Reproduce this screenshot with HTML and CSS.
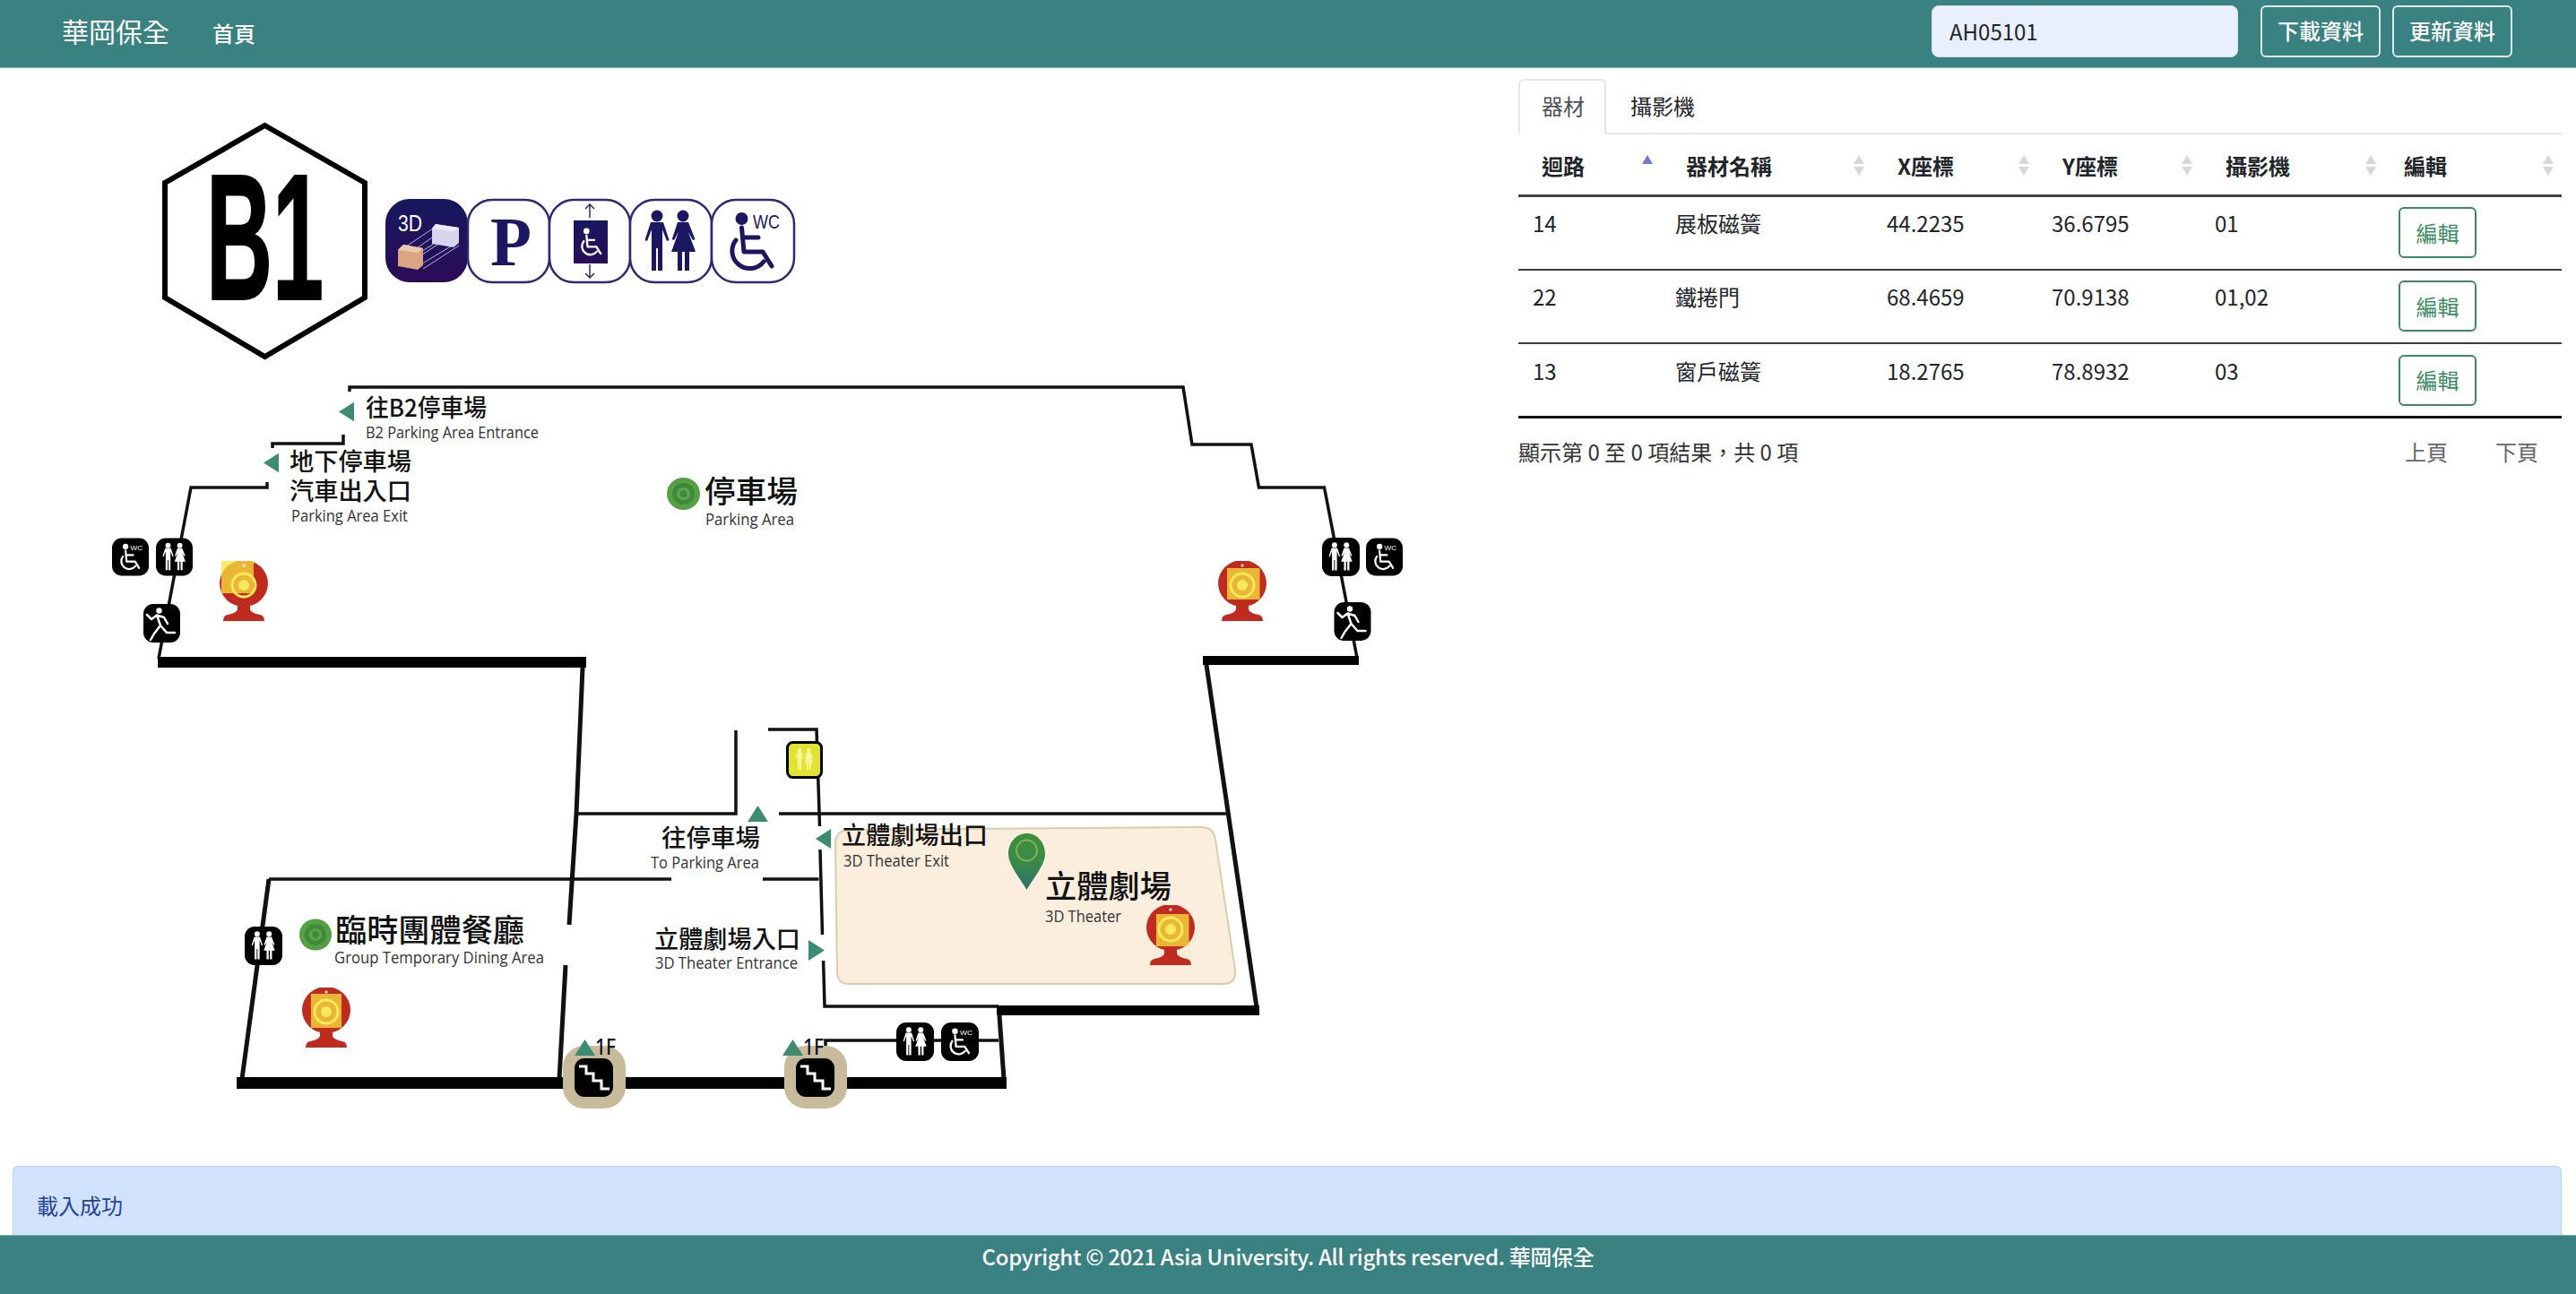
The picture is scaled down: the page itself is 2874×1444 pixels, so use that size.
FILE: index.html
```html
<!DOCTYPE html>
<html lang="zh-Hant">
<head>
<meta charset="utf-8">
<title>華岡保全</title>
<link rel="stylesheet" href="styles.css">
</head>
<body>
<header class="topbar">
  <a class="brand">華岡保全</a>
  <a class="nav-link">首頁</a>
  <input class="search" type="text" value="AH05101" aria-label="search">
  <button class="top-btn">下載資料</button>
  <button class="top-btn">更新資料</button>
</header>

<main class="content">
  <section class="map-pane">
    <svg class="map" viewBox="0 75 1694 1226" xmlns="http://www.w3.org/2000/svg">
      <defs>
        <linearGradient id="navy" x1="0" y1="0" x2="0" y2="1"><stop offset="0" stop-color="#16195f"/><stop offset="1" stop-color="#2b0b57"/></linearGradient>
        <linearGradient id="pinfill" x1="0" y1="0" x2="0" y2="1"><stop offset="0" stop-color="#3f8f36"/><stop offset=".5" stop-color="#3a8a4a"/><stop offset="1" stop-color="#2f6f6a"/></linearGradient>
        <symbol id="people" viewBox="0 0 91 93">
          <circle cx="30" cy="18" r="6.5"/><circle cx="59" cy="18" r="6.5"/>
          <path d="M23 25H37L43.5 45 41 46 36 33V79H31V54H29V79H24V33L19 46 16.5 45Z"/>
          <path d="M53 25H65L72.5 44 70 45 65 36 73 58H66V79H61V58H58V79H53V58H46L54 36 49 45 46.7 44Z"/>
        </symbol>
        <symbol id="chair" viewBox="0 0 91 93">
          <circle cx="33.5" cy="21" r="7"/>
          <path class="chair-stroke" d="M33.5 31 36 58H57L67 74M35 42H52M27 45A19 19 0 1 0 58 69"/>
        </symbol>
        <symbol id="tile-people" viewBox="0 0 42 43">
          <rect width="42" height="43" rx="11" fill="#000"/>
          <use href="#people" class="white-glyph" width="42" height="43"/>
        </symbol>
        <symbol id="tile-chair" viewBox="0 0 42 43">
          <rect width="42" height="43" rx="11" fill="#000"/>
          <use href="#chair" class="white-glyph" width="42" height="43"/>
          <text class="tiny-wc" x="21" y="14" textLength="14" lengthAdjust="spacingAndGlyphs">WC</text>
        </symbol>
        <symbol id="tile-run" viewBox="0 0 41 43">
          <rect width="41" height="43" rx="11" fill="#000"/>
          <circle cx="17.500" cy="7.500" r="3.200" fill="#fff"/>
          <path class="run-stroke" d="M4 12 9 17 15 12.500 19 24 12 33 8 40M15 12.500 23 15 27 22M19 24 26 32H35"/>
        </symbol>
        <symbol id="tile-stairs" viewBox="0 0 43 43">
          <rect width="43" height="43" rx="11" fill="#000"/>
          <path class="stairs-stroke" d="M5 9H13V17H21V25H30V34H39"/>
        </symbol>
        <symbol id="dot" viewBox="0 0 37 36">
          <ellipse cx="18.500" cy="18" rx="18.500" ry="18" fill="#55a044"/>
          <ellipse cx="18.500" cy="18" rx="12.500" ry="12" fill="#3e8a3a"/>
          <ellipse cx="18.500" cy="18" rx="7.500" ry="7" fill="#5aa64c"/>
          <ellipse cx="18.500" cy="18" rx="4" ry="4" fill="#3e8a3a"/>
        </symbol>
        <symbol id="cam-body" viewBox="0 0 54 67">
          <ellipse cx="27" cy="25" rx="27" ry="26" fill="#bf2c1f"/>
          <path d="M20 47H34V54Q35 58 45 60Q50 61 50 67H4Q4 61 9 60Q19 58 20 54Z" fill="#bf2c1f"/>
        </symbol>
        <symbol id="cam-lens" viewBox="0 0 54 67">
          <circle cx="27" cy="5" r="1.500" fill="#fff"/>
          <circle cx="27" cy="27" r="13" fill="none" stroke="#f8ea5a" stroke-width="3"/>
          <circle cx="27" cy="27" r="6" fill="#f8ea5a"/>
        </symbol>
        <symbol id="arrow-left" viewBox="0 0 18 23"><path d="M0 11.500 18 0V23Z" fill="#3d8b72"/></symbol>
        <symbol id="arrow-right" viewBox="0 0 18 23"><path d="M18 11.500 0 0V23Z" fill="#3d8b72"/></symbol>
        <symbol id="arrow-up" viewBox="0 0 23 18"><path d="M11.500 0 23 18H0Z" fill="#3d8b72"/></symbol>
      </defs>

      <!-- Floor badge -->
      <path class="hex" d="M295.500 140 407 204V332L295.500 398 184 332V204Z"/>
      <text class="b1" x="230" y="334" textLength="131" lengthAdjust="spacingAndGlyphs">B1</text>

      <!-- Facility tiles -->
      <rect x="430" y="222" width="92" height="93" rx="27" fill="url(#navy)"/>
      <text class="tile-3d" x="444" y="258" textLength="27" lengthAdjust="spacingAndGlyphs">3D</text>
      <path class="cube-lines" d="M450 277 486 253M456 283 494 257M462 290 505 262M468 296 511 270M472 300 512 274M446 296 484 272"/>
      <path d="M486 250 512 254V271L506 276 482 272V255Z" fill="#d7d5ee"/>
      <path d="M486 250 512 254 506 258 482 255Z" fill="#ecebf8"/>
      <path d="M450 273 472 277V296L466 301 444 297V279Z" fill="#dba583"/>
      <path d="M450 273 472 277 466 282 444 279Z" fill="#eac9b0"/>
      <rect class="tile" x="522" y="223" width="91" height="92" rx="27"/>
      <text class="tile-p" x="547" y="296" textLength="46" lengthAdjust="spacingAndGlyphs">P</text>
      <rect class="tile" x="613" y="223" width="90" height="92" rx="27"/>
      <path class="thin-arrows" d="M658 228V243M653 233 658 228 663 233M658 295V310M653 305 658 310 663 305"/>
      <rect x="640" y="246" width="38" height="48" fill="url(#navy)"/>
      <use href="#chair" class="white-glyph" x="638" y="248" width="44" height="44"/>
      <rect class="tile" x="703" y="223" width="91" height="92" rx="27"/>
      <use href="#people" class="navy-glyph" x="703" y="223" width="91" height="93"/>
      <rect class="tile" x="794" y="223" width="92" height="92" rx="27"/>
      <use href="#chair" class="navy-glyph" x="794" y="223" width="91" height="93"/>
      <text class="tile-wc" x="840" y="255" textLength="30" lengthAdjust="spacingAndGlyphs">WC</text>

      <!-- Walls -->
      <path class="wall" d="M390 437V432H1320L1330 496H1396L1404.500 544H1477.500L1514 734"/>
      <path class="wall" d="M383 485V495H304V500"/>
      <path class="wall" d="M298 538V544H213L177 735"/>
      <rect class="wall-heavy" x="176" y="733" width="478" height="12"/>
      <path class="wall wall-m" d="M650 745 643 908 635 1032M631 1077 624 1204"/>
      <path class="wall-heavy" d="M1342 732H1516V742H1342Z"/>
      <path class="wall wall-m" d="M1346 742 1402 1124"/>
      <path class="wall wall-s" d="M643 908H821V815M869 908H1369M857 814H911L914.500 922M915 948 917.500 1043M918.600 1072 920 1123H1114M300 981H749M851 981H913.500M921 1168V1161H1114"/>
      <path class="wall wall-m" d="M300 981 270 1204"/>
      <rect class="wall-heavy" x="1112" y="1122" width="293" height="11"/>
      <path class="wall wall-m" d="M1115 1133 1120 1204"/>
      <rect class="wall-heavy" x="264" y="1202" width="859" height="13"/>

      <!-- Theater room -->
      <path class="room" d="M948 926 1340 923Q1354 923 1356 937L1378 1082Q1380 1098 1364 1098H948Q934 1098 934 1084L932 942Q932 926 948 926Z"/>

      <!-- Labels -->
      <text class="zh" x="408" y="465" textLength="135" lengthAdjust="spacingAndGlyphs">往B2停車場</text>
      <text class="en" x="408" y="489" textLength="193" lengthAdjust="spacingAndGlyphs">B2 Parking Area Entrance</text>
      <text class="zh" x="323" y="525" textLength="136" lengthAdjust="spacingAndGlyphs">地下停車場</text>
      <text class="zh" x="323" y="558" textLength="136" lengthAdjust="spacingAndGlyphs">汽車出入口</text>
      <text class="en" x="325" y="582" textLength="130" lengthAdjust="spacingAndGlyphs">Parking Area Exit</text>
      <text class="zh zh-l" x="786" y="561" textLength="104" lengthAdjust="spacingAndGlyphs">停車場</text>
      <text class="en" x="787" y="586" textLength="99" lengthAdjust="spacingAndGlyphs">Parking Area</text>
      <text class="zh" x="738" y="945" textLength="110" lengthAdjust="spacingAndGlyphs">往停車場</text>
      <text class="en" x="726" y="969" textLength="121" lengthAdjust="spacingAndGlyphs">To Parking Area</text>
      <text class="zh" x="939" y="942" textLength="163" lengthAdjust="spacingAndGlyphs">立體劇場出口</text>
      <text class="en" x="941" y="967" textLength="118" lengthAdjust="spacingAndGlyphs">3D Theater Exit</text>
      <text class="zh zh-xl" x="1166" y="1002" textLength="141" lengthAdjust="spacingAndGlyphs">立體劇場</text>
      <text class="en" x="1166" y="1029" textLength="85" lengthAdjust="spacingAndGlyphs">3D Theater</text>
      <text class="zh zh-xl" x="374" y="1051" textLength="211" lengthAdjust="spacingAndGlyphs">臨時團體餐廳</text>
      <text class="en" x="373" y="1075" textLength="234" lengthAdjust="spacingAndGlyphs">Group Temporary Dining Area</text>
      <text class="zh" x="730" y="1058" textLength="163" lengthAdjust="spacingAndGlyphs">立體劇場入口</text>
      <text class="en" x="731" y="1081" textLength="159" lengthAdjust="spacingAndGlyphs">3D Theater Entrance</text>

      <!-- Markers -->
      <use href="#arrow-left" x="378" y="448" width="17" height="23"/>
      <use href="#arrow-left" x="294" y="505" width="17" height="23"/>
      <use href="#arrow-left" x="909" y="925" width="19" height="22"/>
      <use href="#arrow-right" x="902" y="1049" width="18" height="23"/>
      <use href="#arrow-up" x="834" y="899" width="23" height="18"/>
      <use href="#dot" x="744" y="533" width="37" height="36"/>
      <use href="#dot" x="334" y="1025" width="36" height="36"/>
      <path d="M1145.500 930C1157 930 1166 940 1166 953 1166 965 1153 980 1145.500 993 1138 980 1125 965 1125 953 1125 940 1134 930 1145.500 930Z" fill="url(#pinfill)"/>
      <circle cx="1145.500" cy="949" r="11.500" fill="none" stroke="#7cb35a" stroke-width="2"/>

      <use href="#tile-chair" x="125" y="600" width="41" height="43"/>
      <use href="#tile-people" x="174" y="600" width="41" height="43"/>
      <use href="#tile-run" x="160" y="674" width="41" height="43"/>
      <use href="#tile-people" x="1475" y="600" width="42" height="43"/>
      <use href="#tile-chair" x="1524" y="600" width="41" height="43"/>
      <use href="#tile-run" x="1488" y="672" width="42" height="43"/>
      <use href="#tile-people" x="273" y="1034" width="42" height="43"/>
      <use href="#tile-people" x="1000" y="1141" width="42" height="43"/>
      <use href="#tile-chair" x="1050" y="1141" width="42" height="43"/>

      <rect x="878.500" y="828.500" width="38" height="39" rx="6" fill="#e2e230" stroke="#000" stroke-width="3"/>
      <use href="#people" class="pale-glyph" x="881" y="831" width="33" height="33"/>

      <!-- Cameras -->
      <use href="#cam-body" x="245" y="626" width="54" height="67"/>
      <rect class="cam-rect" x="247" y="626" width="36" height="36"/>
      <use href="#cam-lens" x="245" y="626" width="54" height="67"/>
      <use href="#cam-body" x="1359" y="626" width="54" height="67"/>
      <rect class="cam-rect" x="1369" y="634" width="36.500" height="35"/>
      <use href="#cam-lens" x="1359" y="626" width="54" height="67"/>
      <use href="#cam-body" x="337" y="1102" width="54" height="67"/>
      <rect class="cam-rect" x="347" y="1109" width="34" height="38"/>
      <use href="#cam-lens" x="337" y="1102" width="54" height="67"/>
      <use href="#cam-body" x="1279" y="1010" width="54" height="67"/>
      <rect class="cam-rect" x="1290" y="1020" width="36.500" height="36"/>
      <use href="#cam-lens" x="1279" y="1010" width="54" height="67"/>

      <!-- Stairs -->
      <rect class="beige" x="628" y="1167" width="70" height="70" rx="24"/>
      <use href="#tile-stairs" x="641" y="1181" width="43" height="43"/>
      <use href="#arrow-up" x="640" y="1160" width="25" height="18"/>
      <text class="zh-f" x="664" y="1177" textLength="23" lengthAdjust="spacingAndGlyphs">1F</text>
      <rect class="beige" x="875" y="1167" width="70" height="70" rx="24"/>
      <use href="#tile-stairs" x="888" y="1181" width="43" height="43"/>
      <use href="#arrow-up" x="873" y="1160" width="23" height="18"/>
      <text class="zh-f" x="896" y="1177" textLength="23" lengthAdjust="spacingAndGlyphs">1F</text>
    </svg>
  </section>

  <section class="side-pane">
    <nav class="tabs">
      <a class="tab tab-active">器材</a>
      <a class="tab">攝影機</a>
    </nav>
    <table class="grid">
      <colgroup>
        <col class="c1"><col class="c2"><col class="c3"><col class="c4"><col class="c5"><col class="c6">
      </colgroup>
      <thead>
        <tr>
          <th class="th-first"><div class="th-in"><span>迴路</span><span class="sort sort-asc"></span></div></th>
          <th><div class="th-in"><span>器材名稱</span><span class="sort"></span></div></th>
          <th><div class="th-in"><span>X座標</span><span class="sort"></span></div></th>
          <th><div class="th-in"><span>Y座標</span><span class="sort"></span></div></th>
          <th><div class="th-in"><span>攝影機</span><span class="sort"></span></div></th>
          <th class="th-last"><div class="th-in"><span>編輯</span><span class="sort"></span></div></th>
        </tr>
      </thead>
      <tbody>
        <tr><td>14</td><td>展板磁簧</td><td>44.2235</td><td>36.6795</td><td>01</td><td class="act"><button class="edit">編輯</button></td></tr>
        <tr><td>22</td><td>鐵捲門</td><td>68.4659</td><td>70.9138</td><td>01,02</td><td class="act"><button class="edit">編輯</button></td></tr>
        <tr class="last"><td>13</td><td>窗戶磁簧</td><td>18.2765</td><td>78.8932</td><td>03</td><td class="act"><button class="edit">編輯</button></td></tr>
      </tbody>
    </table>
    <div class="pager">
      <span class="info">顯示第 0 至 0 項結果，共 0 項</span>
      <span class="pages"><a>上頁</a><a>下頁</a></span>
    </div>
  </section>
</main>

<div class="alert">載入成功</div>
<footer class="footer">Copyright © 2021 Asia University. All rights reserved. 華岡保全</footer>
</body>
</html>
```
FILE: styles.css
```css
* { box-sizing: border-box; }
html, body { margin: 0; height: 100%; }
body {
  height: 1444px;
  overflow: hidden;
  display: flex;
  flex-direction: column;
  font-family: "Noto Sans CJK TC", "Noto Sans", sans-serif;
  font-size: 24px;
  line-height: 36px;
  color: #212529;
  background: #fff;
}

/* Top bar */
.topbar {
  flex: none;
  height: 76px;
  display: flex;
  align-items: center;
  padding: 0 71px 5px 69px;
  background: #3a8182;
  border-bottom: 1px solid #7fb0b0;
  color: #fff;
}
.brand { font-size: 30px; line-height: 45px; margin-right: 48px; margin-top: -2px; }
.nav-link { font-size: 24px; font-weight: 500; margin-top: 4px; }
.search {
  margin-left: auto;
  width: 342px;
  height: 58px;
  padding: 0 19px 2px;
  border: 1px solid #d5dde8;
  border-radius: 8px;
  background: #e8f0fe;
  font: inherit;
  color: #212529;
}
.top-btn {
  width: 134px;
  height: 58px;
  margin-left: 13px;
  padding: 0 0 2px;
  border: 2px solid #dfeaea;
  border-radius: 6px;
  background: transparent;
  color: #fff;
  font: inherit;
  font-weight: 500;
}
.search + .top-btn { margin-left: 25px; }

/* Main area */
.content { flex: none; height: 1225px; display: flex; }
.map-pane { flex: none; width: 1694px; }
.map { display: block; width: 1694px; height: 1226px; margin-top: -1px; }
.side-pane { flex: none; width: 1164px; padding-top: 12px; }

/* Map drawing */
.hex { fill: #fff; stroke: #000; stroke-width: 6; stroke-linejoin: miter; }
.b1 {
  font-family: "Liberation Sans", sans-serif;
  font-weight: 700;
  font-size: 200px;
  fill: #000;
  stroke: #000;
  stroke-width: 2;
}
.tile { fill: #fff; stroke: #2c2a72; stroke-width: 2.5; }
.tile-3d { font-family: "Liberation Sans", sans-serif; font-size: 26px; fill: #fff; }
.tile-p { font-family: "Liberation Serif", serif; font-weight: 700; font-size: 78px; fill: #1b1760; }
.tile-wc { font-family: "Liberation Sans", sans-serif; font-size: 22px; fill: #1b1760; }
.tiny-wc { font-family: "Liberation Sans", sans-serif; font-size: 8px; fill: #fff; }
.cube-lines { fill: none; stroke: #b9b7dc; stroke-width: 1; }
.thin-arrows { fill: none; stroke: #2c2a72; stroke-width: 1.5; }
.navy-glyph { color: #1b1760; fill: #1b1760; stroke: #1b1760; }
.white-glyph { color: #fff; fill: #fff; stroke: #fff; }
.pale-glyph { fill: #f7f7a0; stroke: #f7f7a0; }
.navy-glyph, .white-glyph, .pale-glyph { stroke-width: 0; }
.chair-stroke { fill: none; stroke-width: 5; stroke-linejoin: round; stroke-linecap: round; }
.navy-glyph .chair-stroke { stroke: #1b1760; }
.run-stroke { fill: none; stroke: #fff; stroke-width: 2.5; stroke-linejoin: round; stroke-linecap: round; }
.stairs-stroke { fill: none; stroke: #fff; stroke-width: 3; }
.wall { fill: none; stroke: #111; stroke-width: 3.5; stroke-linejoin: miter; }
.wall-m { stroke-width: 5; }
.wall-s { stroke-width: 3.5; }
.wall-heavy { fill: #000; }
.room { fill: #fbeedd; stroke: #d9cdab; stroke-width: 2; }
.beige { fill: #c8bb9c; }
.cam-rect { fill: #f7e43f; opacity: .75; }
.zh {
  font-family: "Noto Sans CJK TC", sans-serif;
  font-size: 27px;
  font-weight: 500;
  fill: #111;
}
.zh-l { font-size: 34px; }
.zh-xl { font-size: 35px; }
.zh-f { font-family: "Noto Sans", sans-serif; font-size: 25px; font-weight: 500; fill: #111; }
.en { font-family: "Open Sans", "Noto Sans", sans-serif; font-size: 19px; fill: #333; }

/* Tabs */
.tabs {
  display: flex;
  height: 62px;
  border-bottom: 2px solid #e4e7ea;
}
.tab {
  display: block;
  height: 62px;
  padding: 12px 26px 0 27px;
  color: #212529;
}
.tab-active {
  width: 98px;
  color: #495057;
  background: #fff;
  border: 2px solid #e4e7ea;
  border-bottom-color: #fff;
  border-radius: 6px 6px 0 0;
  padding: 10px 0 0 24px;
}

/* Table */
.grid { width: 1164px; table-layout: fixed; border-collapse: collapse; }
.c1 { width: 159px; }
.c2 { width: 236px; }
.c3 { width: 184px; }
.c4 { width: 182px; }
.c5 { width: 205px; }
.c6 { width: 198px; }
.grid th {
  height: 68px;
  padding: 3px 9px 0 28px;
  font-weight: 700;
  text-align: left;
  border-bottom: 3px solid #444;
}
.grid .th-first { padding-left: 26px; }
.grid .th-last { padding-left: 22px; }
.th-in { display: flex; align-items: center; justify-content: space-between; }
.sort { display: flex; flex-direction: column; gap: 3px; width: 12px; }
.sort::before, .sort::after {
  content: "";
  display: block;
  width: 0;
  height: 0;
  border-left: 6px solid transparent;
  border-right: 6px solid transparent;
}
.sort::before { border-bottom: 10px solid #d6d8da; }
.sort::after { border-top: 10px solid #d6d8da; }
.sort-asc::before { border-bottom-color: #7179cc; }
.sort-asc::after { border-top-color: transparent; }
.grid td {
  height: 82.500px;
  padding: 0 16px 21px;
  vertical-align: middle;
  border-bottom: 2px solid #3c3c3c;
}
.grid .last td { border-bottom: 3px solid #111; }
.grid .act { padding: 0 16px; }
.edit {
  display: block;
  width: 87px;
  height: 57px;
  padding: 0;
  background: #fff;
  color: #3c8a62;
  border: 2px solid #3c8a62;
  border-radius: 6px;
  font: inherit;
}

/* Pager */
.pager {
  display: flex;
  justify-content: space-between;
  align-items: center;
  margin-top: 19px;
  color: #333;
}
.pages { display: flex; gap: 53px; padding-right: 26px; color: #666; }

/* Status + footer */
.alert {
  flex: none;
  height: 77px;
  margin: 0 16px 0 14px;
  padding: 25px 26px 0;
  background: #d1e2fc;
  border: 1px solid #b8d2fb;
  border-bottom: 0;
  border-radius: 6px 6px 0 0;
  color: #24439a;
}
.footer {
  flex: none;
  height: 66px;
  padding-top: 5px;
  text-align: center;
  background: #3a8182;
  border-top: 1px solid #7fb0b0;
  color: #fff;
  font-weight: 500;
  letter-spacing: -.3px;
}
```
